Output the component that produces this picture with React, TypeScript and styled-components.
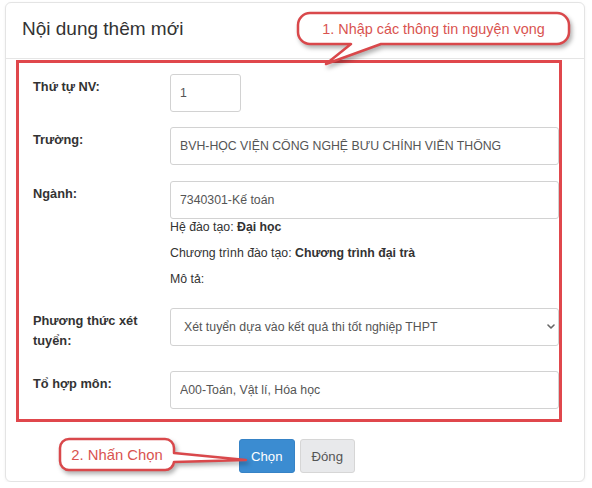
import React from 'react';
import styled, {createGlobalStyle} from 'styled-components';

const GlobalStyle = createGlobalStyle`
  body {
    margin: 0;
    background: #fff;
    font-family: "Liberation Sans", Arial, sans-serif;
    color: #333;
  }
  * {
    box-sizing: border-box;
  }
`

type FieldRow = {
    label: string
    value: string
    mt: number
    short?: boolean
}

const topRows: FieldRow[] = [
    {label: 'Thứ tự NV:', value: '1', mt: 0, short: true},
    {label: 'Trường:', value: 'BVH-HỌC VIỆN CÔNG NGHỆ BƯU CHÍNH VIỄN THÔNG', mt: 15},
]

export default function App() {
    return (
        <Page>
            <GlobalStyle/>
            <Card>
                <Header>
                    <Title>Nội dung thêm mới</Title>
                </Header>
                <Body>
                    <Highlight>
                        {topRows.map(row => (
                            <Row key={row.label} $mt={row.mt}>
                                <Label>{row.label}</Label>
                                <Field>
                                    <Input $short={row.short} defaultValue={row.value} readOnly/>
                                </Field>
                            </Row>
                        ))}
                        <Row $mt={16}>
                            <Label>Ngành:</Label>
                            <Field>
                                <Input defaultValue="7340301-Kế toán" readOnly/>
                                <Help $first>Hệ đào tạo: <b>Đại học</b></Help>
                                <Help>Chương trình đào tạo: <b>Chương trình đại trà</b></Help>
                                <Help>Mô tả:</Help>
                            </Field>
                        </Row>
                        <Row $mt={20}>
                            <Label>Phương thức xét tuyển:</Label>
                            <Field>
                                <SelectWrap>
                                    <Select defaultValue="thpt">
                                        <option value="thpt">Xét tuyển dựa vào kết quả thi tốt nghiệp THPT</option>
                                    </Select>
                                    <Chevron viewBox="0 0 8 5">
                                        <path d="M1 1 L4 4 L7 1" fill="none" stroke="#666" strokeWidth="1.6"
                                              strokeLinecap="round" strokeLinejoin="round"/>
                                    </Chevron>
                                </SelectWrap>
                            </Field>
                        </Row>
                        <Row $mt={20}>
                            <Label>Tổ hợp môn:</Label>
                            <Field>
                                <Input defaultValue="A00-Toán, Vật lí, Hóa học" readOnly/>
                            </Field>
                        </Row>
                    </Highlight>
                </Body>
                <Footer>
                    <Button $primary>Chọn</Button>
                    <Button>Đóng</Button>
                </Footer>

                {/* annotation bubbles drawn over the form */}
                <Callout $left={285} $top={3} $w={290} $h={66}>
                    <svg width="290" height="66" viewBox="0 0 290 66">
                        <path
                            d="M19 7 H266 A12 12 0 0 1 278 19 V26 A12 12 0 0 1 266 38 H90 L35 58 L60 38 H19 A12 12 0 0 1 7 26 V19 A12 12 0 0 1 19 7 Z"
                            fill="#fff" stroke="#d9484b" strokeWidth="2.5" strokeLinejoin="round"/>
                    </svg>
                    <CalloutText $x={7} $y={7} $w={271} $h={31} $size={14.4}>
                        1. Nhập các thông tin nguyện vọng
                    </CalloutText>
                </Callout>
                <Callout $left={45} $top={428} $w={205} $h={50}>
                    <svg width="205" height="50" viewBox="0 0 205 50">
                        <path
                            d="M18 8 H114 A9 9 0 0 1 123 17 V22 L195 29 L123 31 A9 9 0 0 1 114 39 H18 A9 9 0 0 1 9 30 V17 A9 9 0 0 1 18 8 Z"
                            fill="#fff" stroke="#d9484b" strokeWidth="2.5" strokeLinejoin="round"/>
                    </svg>
                    <CalloutText $x={9} $y={8} $w={114} $h={31} $size={14.8}>
                        2. Nhấn Chọn
                    </CalloutText>
                </Callout>
            </Card>
        </Page>
    );
}

const Page = styled.div`
  padding: 2px 0 0 5px;
`

const Card = styled.div`
  position: relative;
  width: 580px;
  background: #fff;
  border: 1px solid #e4e4e4;
  border-radius: 6px;
  box-shadow: 0 1px 3px rgba(0, 0, 0, 0.06);
`

const Header = styled.div`
  padding: 15px 15px 19px 16px;
  border-bottom: 1px solid #e5e5e5;
`

const Title = styled.h4`
  margin: 0;
  font-size: 19px;
  line-height: 21px;
  font-weight: normal;
  color: #333;
`

const Body = styled.div`
  padding: 1px 22px 0 10px;
`

const Highlight = styled.div`
  border: 3px solid #e0474c;
  padding: 11px 0 10px 14px;
`

const Row = styled.div<{ $mt: number }>`
  display: grid;
  grid-template-columns: 137px 1fr;
  align-items: start;
  margin-top: ${p => p.$mt}px;
`

const Label = styled.label`
  padding: 3px 14px 0 0;
  font-size: 12.8px;
  line-height: 20px;
  font-weight: bold;
  color: #333;
`

const Field = styled.div`
  display: flex;
  flex-direction: column;
  align-items: flex-start;
`

const Input = styled.input<{ $short?: boolean }>`
  width: ${p => p.$short ? '71px' : '100%'};
  height: 38px;
  padding: 0 9px;
  border: 1px solid #d2d2d2;
  border-radius: 3px;
  background: #fff;
  font-family: inherit;
  font-size: 12.3px;
  color: #555;
  outline: none;
`

const Help = styled.div<{ $first?: boolean }>`
  margin-top: ${p => p.$first ? 0 : 9}px;
  font-size: 12.3px;
  line-height: 17px;
  color: #333;

  b {
    font-weight: bold;
  }
`

const SelectWrap = styled.div`
  position: relative;
  width: 100%;
`

const Select = styled.select`
  display: block;
  width: 100%;
  height: 38px;
  padding: 0 20px 0 13px;
  border: 1px solid #d2d2d2;
  border-radius: 3px;
  background: #fff;
  font-family: inherit;
  font-size: 12.3px;
  color: #555;
  appearance: none;
  outline: none;
`

const Chevron = styled.svg`
  position: absolute;
  right: 4px;
  top: 16px;
  width: 8px;
  height: 5px;
  pointer-events: none;
`

const Footer = styled.div`
  display: flex;
  justify-content: center;
  gap: 5px;
  padding: 17px 0 8px 4px;
`

const Button = styled.button<{ $primary?: boolean }>`
  height: 34px;
  padding: 0 11px;
  border-radius: 3px;
  border: 1px solid ${p => p.$primary ? '#3683c6' : '#d6d6d6'};
  background: ${p => p.$primary ? '#3b8cd1' : '#e8e9eb'};
  color: ${p => p.$primary ? '#fff' : '#555'};
  font-family: inherit;
  font-size: 13.2px;
  cursor: pointer;
`

const Callout = styled.div<{ $left: number; $top: number; $w: number; $h: number }>`
  position: absolute;
  left: ${p => p.$left}px;
  top: ${p => p.$top}px;
  width: ${p => p.$w}px;
  height: ${p => p.$h}px;
  pointer-events: none;

  svg {
    position: absolute;
    left: 0;
    top: 0;
    overflow: visible;
    filter: drop-shadow(2px 3px 2px rgba(0, 0, 0, 0.3));
  }
`

const CalloutText = styled.span<{ $x: number; $y: number; $w: number; $h: number; $size: number }>`
  position: absolute;
  left: ${p => p.$x}px;
  top: ${p => p.$y}px;
  width: ${p => p.$w}px;
  height: ${p => p.$h}px;
  display: flex;
  align-items: center;
  justify-content: center;
  font-size: ${p => p.$size}px;
  color: #d9534f;
  white-space: nowrap;
`
